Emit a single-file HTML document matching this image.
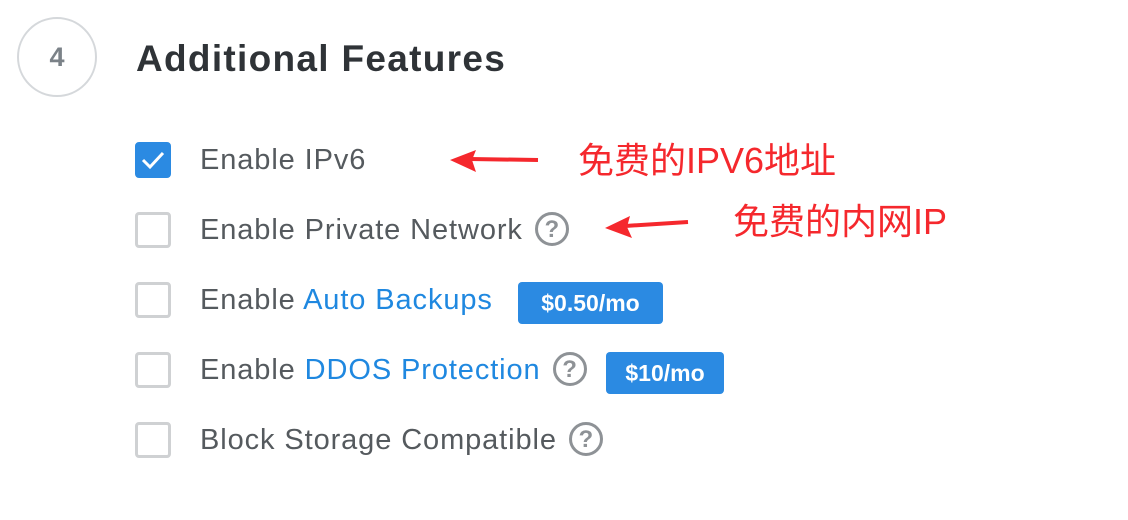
<!DOCTYPE html>
<html><head><meta charset="utf-8"><style>
body{margin:0;width:1128px;height:520px;background:#fff;position:relative;overflow:hidden;font-family:"Liberation Sans","Noto Sans CJK SC",sans-serif}
.a{position:absolute}
.circ{left:17px;top:17px;width:80px;height:80px;border:2px solid #d5d8db;border-radius:50%;box-sizing:border-box;text-align:center;line-height:76px;font-size:27px;font-weight:bold;color:#7b8288}
.title{left:136px;top:37px;font-size:37px;font-weight:bold;color:#2f3337;line-height:44px;letter-spacing:1.3px}
.cb{left:135px;width:36px;height:36px;border:3px solid #cfd1d3;border-radius:4px;box-sizing:border-box}
.cb.on{background:#2b8ae2;border-color:#2b8ae2}
.t{left:200px;font-size:29px;color:#555a5e;line-height:36px;letter-spacing:0.9px;white-space:nowrap}
.t span{color:#1f88e0}
.t span.q{display:inline-block;width:34px;height:34px;border:3px solid #8e9296;border-radius:50%;box-sizing:border-box;color:#8e9296;font-size:24px;font-weight:bold;text-align:center;line-height:29px;vertical-align:middle;margin-left:12px;position:relative;top:-2px;letter-spacing:0}
.b{background:#2b8ae2;color:#fff;font-weight:bold;font-size:23px;border-radius:4px;height:42px;line-height:42px;text-align:center}
.cn{color:#f5282d;font-size:36px;line-height:44px;white-space:nowrap}
</style></head><body>
<div class="a circ">4</div>
<div class="a title">Additional Features</div>

<div class="a cb on" style="top:142px"><svg width="30" height="30" viewBox="0 0 30 30" style="position:absolute;left:0;top:0"><path d="M5 15 L12 22 L25 8" stroke="#fff" stroke-width="3" fill="none"/></svg></div>
<div class="a t" style="top:142px">Enable IPv6</div>

<div class="a cb" style="top:212px"></div>
<div class="a t" style="top:212px">Enable Private Network<span class="q">?</span></div>

<div class="a cb" style="top:282px"></div>
<div class="a t" style="top:282px">Enable <span>Auto Backups</span></div>
<div class="a b" style="left:518px;top:282px;width:145px">$0.50/mo</div>

<div class="a cb" style="top:352px"></div>
<div class="a t" style="top:352px">Enable <span>DDOS Protection</span><span class="q">?</span></div>
<div class="a b" style="left:606px;top:352px;width:118px">$10/mo</div>

<div class="a cb" style="top:422px"></div>
<div class="a t" style="top:422px">Block Storage Compatible<span class="q">?</span></div>

<svg class="a" style="left:0;top:0" width="1128" height="520">
<path d="M538 160 L470 159" stroke="#f5282d" stroke-width="4"/>
<path d="M450 160 L476 150 L472 160 L476 172 Z" fill="#f5282d"/>
<path d="M688 222 L625 226" stroke="#f5282d" stroke-width="4"/>
<path d="M605 228 L630 216 L627 227 L632 238 Z" fill="#f5282d"/>
</svg>
<div class="a cn" style="left:578px;top:139px">免费的IPV6地址</div>
<div class="a cn" style="left:733px;top:200px">免费的内网IP</div>
</body></html>
